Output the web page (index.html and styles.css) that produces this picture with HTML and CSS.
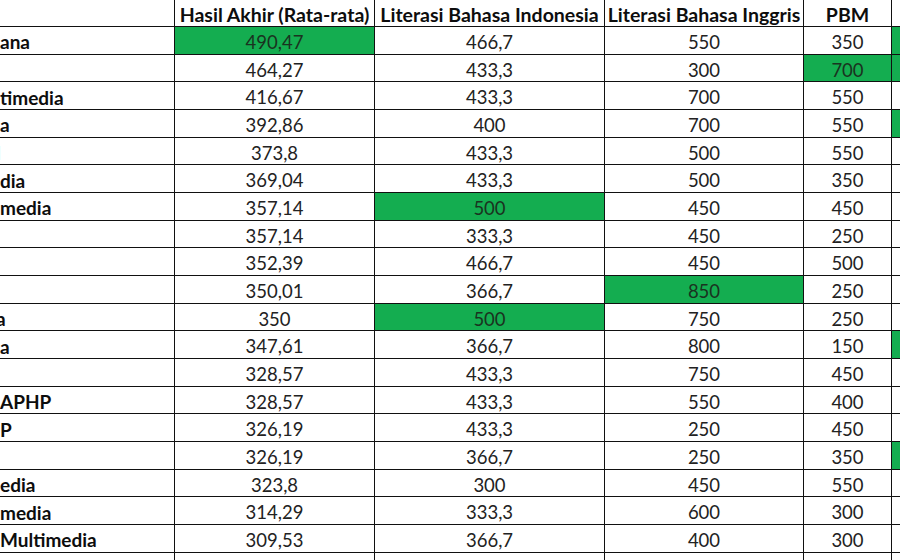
FILE: index.html
```html
<!DOCTYPE html>
<html lang="id">
<head>
<meta charset="utf-8">
<title>Hasil Akhir</title>
<link rel="stylesheet" href="styles.css">
</head>
<body>
<div class="sheet">
  <div class="c h"></div><div class="c h">Hasil Akhir (Rata-rata)</div><div class="c h">Literasi Bahasa Indonesia</div><div class="c h">Literasi Bahasa Inggris</div><div class="c h">PBM</div><div class="c h"></div>

  <div class="c n">ana</div><div class="c g">490,47</div><div class="c">466,7</div><div class="c">550</div><div class="c">350</div><div class="c g"></div>
  <div class="c n"></div><div class="c">464,27</div><div class="c">433,3</div><div class="c">300</div><div class="c g">700</div><div class="c g"></div>
  <div class="c n">timedia</div><div class="c">416,67</div><div class="c">433,3</div><div class="c">700</div><div class="c">550</div><div class="c"></div>
  <div class="c n">a</div><div class="c">392,86</div><div class="c">400</div><div class="c">700</div><div class="c">550</div><div class="c g"></div>
  <div class="c n"><span class="cut">l</span></div><div class="c">373,8</div><div class="c">433,3</div><div class="c">500</div><div class="c">550</div><div class="c"></div>
  <div class="c n">dia</div><div class="c">369,04</div><div class="c">433,3</div><div class="c">500</div><div class="c">350</div><div class="c"></div>
  <div class="c n">media</div><div class="c">357,14</div><div class="c g">500</div><div class="c">450</div><div class="c">450</div><div class="c"></div>
  <div class="c n"></div><div class="c">357,14</div><div class="c">333,3</div><div class="c">450</div><div class="c">250</div><div class="c"></div>
  <div class="c n"></div><div class="c">352,39</div><div class="c">466,7</div><div class="c">450</div><div class="c">500</div><div class="c"></div>
  <div class="c n"></div><div class="c">350,01</div><div class="c">366,7</div><div class="c g">850</div><div class="c">250</div><div class="c"></div>
  <div class="c n"><span class="cut">a</span></div><div class="c">350</div><div class="c g">500</div><div class="c">750</div><div class="c">250</div><div class="c"></div>
  <div class="c n">a</div><div class="c">347,61</div><div class="c">366,7</div><div class="c">800</div><div class="c">150</div><div class="c g"></div>
  <div class="c n"></div><div class="c">328,57</div><div class="c">433,3</div><div class="c">750</div><div class="c">450</div><div class="c"></div>
  <div class="c n">APHP</div><div class="c">328,57</div><div class="c">433,3</div><div class="c">550</div><div class="c">400</div><div class="c"></div>
  <div class="c n">P</div><div class="c">326,19</div><div class="c">433,3</div><div class="c">250</div><div class="c">450</div><div class="c"></div>
  <div class="c n"></div><div class="c">326,19</div><div class="c">366,7</div><div class="c">250</div><div class="c">350</div><div class="c g"></div>
  <div class="c n">edia</div><div class="c">323,8</div><div class="c">300</div><div class="c">450</div><div class="c">550</div><div class="c"></div>
  <div class="c n">media</div><div class="c">314,29</div><div class="c">333,3</div><div class="c">600</div><div class="c">300</div><div class="c"></div>
  <div class="c n">Multimedia</div><div class="c">309,53</div><div class="c">366,7</div><div class="c">400</div><div class="c">300</div><div class="c"></div>
  <div class="c n"></div><div class="c"></div><div class="c"></div><div class="c"></div><div class="c"></div><div class="c"></div>
</div>
</body>
</html>
```

FILE: styles.css
```css
html, body {
  margin: 0;
  padding: 0;
  background: #ffffff;
  overflow: hidden;
}

body {
  width: 900px;
  height: 560px;
  font-family: Lato, "Open Sans", sans-serif;
  color: #222222;
}

.sheet {
  display: grid;
  grid-template-columns: 174px 199px 229px 198px 87px 30px;
  grid-template-rows: 26px repeat(20, 26.68px);
  gap: 1px;
  background: #111111;
  width: 922px;
}

.c {
  background: #ffffff;
  display: flex;
  align-items: center;
  justify-content: center;
  padding-top: 3px;
  box-sizing: border-box;
  font-size: 18.5px;
  white-space: nowrap;
  overflow: hidden;
}

.h {
  font-size: 19.5px;
  font-weight: 700;
  color: #0d0d0d;
  padding-top: 2px;
}

.n {
  justify-content: flex-start;
  font-size: 19px;
  font-weight: 700;
  color: #0d0d0d;
}

.cut {
  margin-left: -4px;
}

.g {
  background: #14ad50;
  color: #1a3320;
}
```
